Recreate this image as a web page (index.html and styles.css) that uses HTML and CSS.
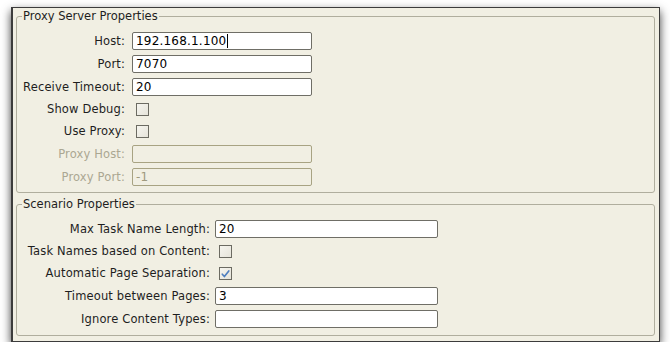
FILE: index.html
```html
<!DOCTYPE html>
<html lang="en">
<head>
    <meta charset="UTF-8">
    <meta name="viewport" content="width=device-width, initial-scale=1.0">
    <title>Properties</title>
    <link rel="stylesheet" href="styles.css">
</head>
<body>
    <div class="window">
        <fieldset class="group proxy">
            <legend>Proxy Server Properties</legend>
            <div class="form">
                <label>Host:</label>
                <div class="field">192.168.1.100<span class="caret"></span></div>

                <label>Port:</label>
                <div class="field">7070</div>

                <label>Receive Timeout:</label>
                <div class="field">20</div>

                <label class="check-label">Show Debug:</label>
                <div class="check-cell"><span class="checkbox"></span></div>

                <label class="check-label">Use Proxy:</label>
                <div class="check-cell"><span class="checkbox"></span></div>

                <label class="disabled">Proxy Host:</label>
                <div class="field disabled"></div>

                <label class="disabled">Proxy Port:</label>
                <div class="field disabled">-1</div>
            </div>
        </fieldset>

        <fieldset class="group scenario">
            <legend>Scenario Properties</legend>
            <div class="form">
                <label>Max Task Name Length:</label>
                <div class="field">20</div>

                <label class="check-label">Task Names based on Content:</label>
                <div class="check-cell"><span class="checkbox"></span></div>

                <label class="check-label">Automatic Page Separation:</label>
                <div class="check-cell">
                    <span class="checkbox checked">
                        <svg viewBox="0 0 12 12" width="12" height="12">
                            <path d="M2.5 6.2 L4.8 8.8 L9.6 2.6" fill="none" stroke="#4f7fbf" stroke-width="1.8" stroke-linecap="round" stroke-linejoin="round"/>
                        </svg>
                    </span>
                </div>

                <label>Timeout between Pages:</label>
                <div class="field">3</div>

                <label>Ignore Content Types:</label>
                <div class="field"></div>
            </div>
        </fieldset>
    </div>
</body>
</html>
```

FILE: styles.css
```css
* {
    margin: 0;
    padding: 0;
    box-sizing: border-box;
}

body {
    font-family: "DejaVu Sans", sans-serif;
    font-size: 11.5px;
    color: #1e1e1e;
    background: #ffffff;
}

.window {
    width: 649px;
    margin: 7px 0 0 11px;
    background: #f1efe3;
    border: 1px solid #3c3c3c;
    border-left-width: 2px;
    box-shadow: 0 4px 9px rgba(0, 0, 0, 0.75);
    padding: 0 4px 5px 3px;
}

.group {
    border: 1px solid #b0ae9e;
    border-radius: 3px;
    padding: 8px 0 6px 0;
}

.group legend {
    margin-left: 5px;
    padding: 0 1px;
    line-height: 16px;
    font-size: 11.5px;
    color: #1e1e1e;
}

.scenario {
    margin-top: 3px;
    padding-bottom: 7px;
}

.form {
    display: grid;
    row-gap: 5px;
    align-items: center;
}

.proxy .form {
    grid-template-columns: 108px 180px;
    column-gap: 7px;
}

.scenario .form {
    grid-template-columns: 193px 223px;
    column-gap: 5px;
}

.form label {
    text-align: right;
    white-space: nowrap;
    line-height: 18px;
    letter-spacing: 0.15px;
}

.form label.check-label {
    line-height: 17px;
}

.form label.disabled {
    color: #aba792;
}

.field {
    height: 18px;
    line-height: 16px;
    padding-left: 3px;
    font-size: 12px;
    letter-spacing: 0.2px;
    background: #ffffff;
    border: 1px solid #6f6e66;
    border-radius: 2px;
    color: #000000;
}

.field.disabled {
    background: #f1efe3;
    border-color: #a8a383;
    color: #9f9a7e;
}

.caret {
    display: inline-block;
    width: 1px;
    height: 14px;
    margin-left: 1px;
    vertical-align: -3px;
    background: #000000;
}

.check-cell {
    height: 17px;
    display: flex;
    align-items: center;
    padding-left: 4px;
}

.checkbox {
    width: 13px;
    height: 13px;
    display: flex;
    align-items: center;
    justify-content: center;
    border: 1px solid #6c6b62;
    background: linear-gradient(135deg, #f6f5ef 0%, #e6e4da 100%);
}
```
